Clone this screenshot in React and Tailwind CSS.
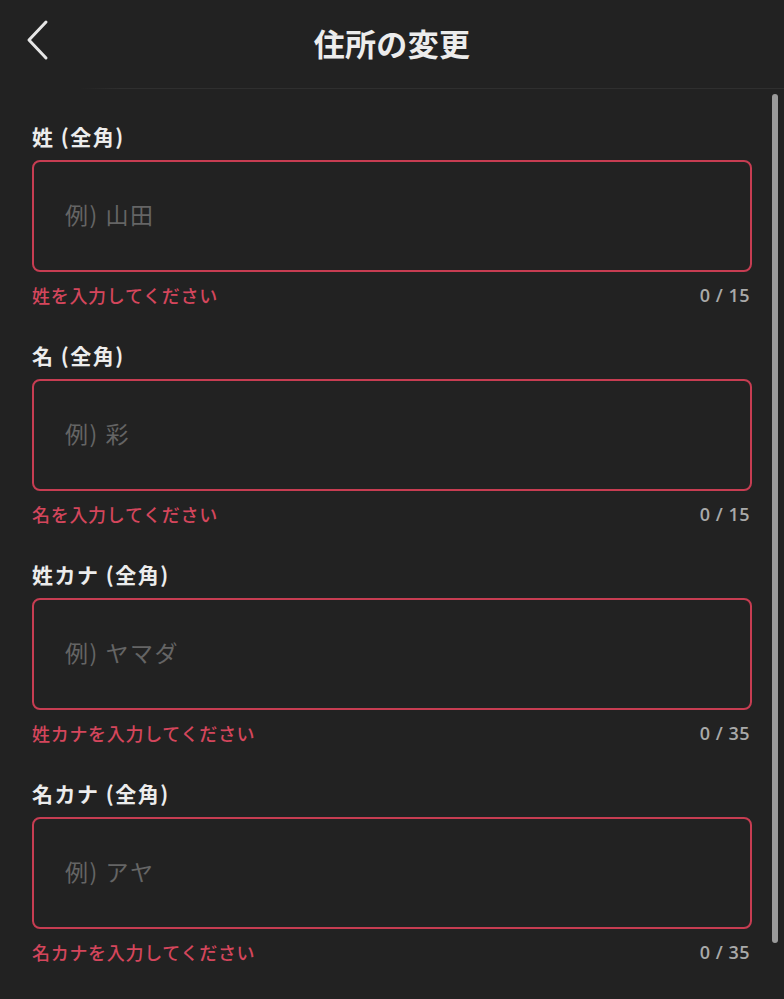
import React from "react";

const fields = [
  { label: "姓 (全角)", placeholder: "例) 山田", error: "姓を入力してください", max: 15 },
  { label: "名 (全角)", placeholder: "例) 彩", error: "名を入力してください", max: 15 },
  { label: "姓カナ (全角)", placeholder: "例) ヤマダ", error: "姓カナを入力してください", max: 35 },
  { label: "名カナ (全角)", placeholder: "例) アヤ", error: "名カナを入力してください", max: 35 },
];

const font = { fontFamily: '"Noto Sans CJK JP", "Noto Sans", sans-serif' };

export default function App() {
  return (
    <div className="relative w-[784px] h-[999px] overflow-hidden bg-[#222222]" style={font}>
      <header className="relative h-[88px] flex items-center justify-center">
        <button className="absolute left-[22px] top-[18px] w-[32px] h-[44px] flex items-center justify-center">
          <svg width="24" height="42" viewBox="0 0 24 42" fill="none">
            <path d="M20 3 L3 21 L20 39" stroke="#e6e6e6" strokeWidth="3" strokeLinecap="round" strokeLinejoin="round" />
          </svg>
        </button>
        <h1 className="text-[31px] leading-[36px] font-bold text-[#ececec] -mt-[3px] tracking-[0.3px]">住所の変更</h1>
      </header>
      <div className="h-px bg-[linear-gradient(to_right,transparent_80px,#2f2f2f_120px)]" />

      <main className="px-[32px] pt-[35px] flex flex-col gap-[38px]">
        {fields.map((f) => (
          <section key={f.label} className="flex flex-col">
            <label className="text-[21px] leading-[24px] font-bold text-[#ececec] mb-[12px] tracking-[1.5px]">{f.label}</label>
            <div className="h-[112px] w-[720px] rounded-[8px] border-2 border-[#c73d52] flex items-center pl-[31px]">
              <span className="text-[23px] leading-[28px] text-[#656565] pb-[4px] tracking-[1.5px]">{f.placeholder}</span>
            </div>
            <div className="mt-[13px] h-[20px] flex items-center justify-between w-[720px]">
              <span className="text-[18px] leading-[20px] font-medium text-[#d4465c] tracking-[0.7px]">{f.error}</span>
              <span className="text-[18px] leading-[20px] font-semibold text-[#a9a9a9] pr-[2px] tracking-[0.5px]" style={{ fontFamily: '"Open Sans", "Noto Sans", sans-serif' }}>
                0 / {f.max}
              </span>
            </div>
          </section>
        ))}
      </main>

      <div className="absolute left-[772px] top-[94px] w-[6px] h-[849px] rounded-full bg-[#9b9b9b]" />
    </div>
  );
}
